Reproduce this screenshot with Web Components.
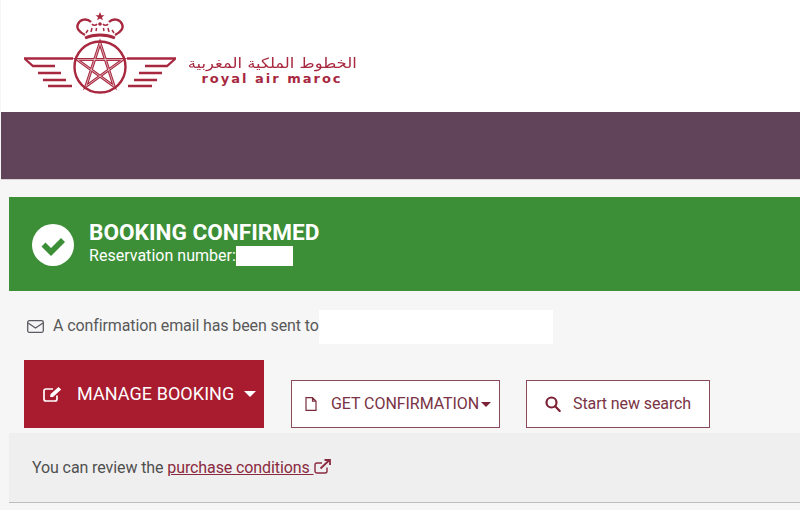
<!DOCTYPE html>
<html>
<head>
<meta charset="utf-8">
<style>
  html, body { margin: 0; padding: 0; background: #f6f6f6; }
  body { width: 800px; height: 510px; overflow: hidden; font-family: Roboto, "Liberation Sans", sans-serif; }
  main { display: block; padding-left: 9px; }
  .actions { display: flex; align-items: flex-end; padding-left: 15px; margin-top: 16px; }
</style>
</head>
<body>
<ram-header></ram-header>
<main>
  <confirm-banner>BOOKING CONFIRMED</confirm-banner>
  <mail-notice>A confirmation email has been sent to</mail-notice>
  <div class="actions">
    <manage-button>MANAGE BOOKING</manage-button>
    <outline-button icon="file" caret pad="13" gap="14" style="margin-left:27px;width:209px;letter-spacing:-.06px">GET CONFIRMATION</outline-button>
    <outline-button icon="search" pad="18" gap="12" style="margin-left:26px;width:184px;letter-spacing:-.1px">Start new search</outline-button>
  </div>
  <review-note>You can review the</review-note>
</main>

<script>
const headerTemplate = document.createElement('template');
headerTemplate.innerHTML = `
  <style>
    :host { display: block; margin-left: 1px; }
    .top { height: 112px; background: #fff; display: flex; align-items: flex-start; padding-left: 23px; }
    svg { display: block; margin-top: 11px; flex: none; filter: blur(.3px); }
    .names { margin-left: 9px; margin-top: 55px; display: flex; flex-direction: column; align-items: center; width: 170px; color: #a8283f; }
    .ar { font: 400 14px/16px "DejaVu Sans", sans-serif; white-space: nowrap; display: block; transform: scaleX(1.17); }
    .en { font: 700 13px/15px "DejaVu Sans", sans-serif; letter-spacing: 2px; white-space: nowrap; }
    .band { height: 68px; background: #62445a; border-bottom: 1px solid #d9d2d8; box-sizing: border-box; }
  </style>
  <div class="top">
    <svg width="154" height="84" viewBox="24 11 154 84" fill="none" stroke="#a8283f">
      <!-- crown -->
      <path d="M100 12l1.300 3.200h3.200l-2.500 2 .9 3.100-2.900-1.900-2.900 1.900.9-3.100-2.500-2h3.200z" fill="#a8283f" stroke="none"/>
      <path d="M85 35c-6-3-9-7-7-11 2-5 9-6 13-2M115 35c6-3 9-7 7-11-2-5-9-6-13-2" stroke-width="2.400"/>
      <path d="M92 24a3 3 0 0 0 5 0M103 24a3 3 0 0 0 5 0" stroke-width="1.500"/>
      <circle cx="100" cy="24" r="1.800" fill="#a8283f" stroke="none"/>
      <path d="M86 33l2-3M91 32l1-4M96 31l.6-3M104 31l-.6-3M109 32l-1-4M114 33l-2-3" stroke-width="1.500"/>
      <path d="M85 38c9-4 21-4 30 0" stroke-width="2.800"/>
      <!-- roundel -->
      <circle cx="100" cy="67" r="25.500" stroke-width="2.400"/>
      <path d="M100 43l14.100 43.400-36.900-26.800h45.600l-36.900 26.800z" stroke-width="3"/>
      <path d="M100 43l14.100 43.400-36.900-26.800h45.600l-36.900 26.800z" stroke="#fff" stroke-width=".6"/>
      <!-- wings -->
      <g stroke-width="2.300">
        <path d="M24 58.500h49M127 58.500h49" stroke-width="2.600"/>
        <path d="M25 59l8 7h22M175 59l-8 7h-22"/>
        <path d="M38 73h23M162 73h-23"/>
        <path d="M43 80h23M157 80h-23"/>
        <path d="M48 86h24M152 86h-24"/>
      </g>
    </svg>
    <div class="names">
      <span class="ar" dir="rtl">الخطوط الملكية المغربية</span>
      <span class="en">royal air maroc</span>
    </div>
  </div>
  <div class="band"></div>
`;
class RamHeader extends HTMLElement {
  constructor() {
    super();
    this.attachShadow({ mode: 'open' }).appendChild(headerTemplate.content.cloneNode(true));
  }
}
customElements.define('ram-header', RamHeader);

const bannerTemplate = document.createElement('template');
bannerTemplate.innerHTML = `
  <style>
    :host { display: block; margin-top: 17px; background: #3c8f36; color: #fff; height: 94px; }
    .row { display: flex; align-items: center; height: 100%; padding-left: 23px; box-sizing: border-box; }
    svg { flex: none; margin-top: 1px; }
    .txt { margin-left: 15px; margin-top: -4px; }
    h1 { margin: 0; font: 700 22.600px/27px Roboto, sans-serif; }
    p { margin: 0; font: 400 16px/20px Roboto, sans-serif; display: flex; align-items: center; letter-spacing: .02px; }
    i { display: block; width: 57px; height: 20px; background: #fff; }
  </style>
  <div class="row">
    <svg width="42" height="42" viewBox="0 0 42 42">
      <circle cx="21" cy="21" r="21" fill="#fff"/>
      <path d="M9.500 22.500l4-4 5.500 5.500 10-10 4 4-14 14z" fill="#3c8f36"/>
    </svg>
    <div class="txt">
      <h1><slot></slot></h1>
      <p>Reservation number:<i></i></p>
    </div>
  </div>
`;
class ConfirmBanner extends HTMLElement {
  constructor() {
    super();
    this.attachShadow({ mode: 'open' }).appendChild(bannerTemplate.content.cloneNode(true));
  }
}
customElements.define('confirm-banner', ConfirmBanner);

const noticeTemplate = document.createElement('template');
noticeTemplate.innerHTML = `
  <style>
    :host { display: flex; align-items: center; margin-top: 19px; padding-left: 18px; height: 34px; color: #595959; font: 400 16px/20px Roboto, sans-serif; letter-spacing: -.11px; }
    svg { flex: none; margin-right: 9px; margin-top: -1px; }
    span { margin-top: -2px; }
    i { display: block; width: 234px; height: 34px; background: #fff; }
  </style>
  <svg width="17" height="13" viewBox="0 0 17 13" fill="none" stroke="#5b5b63" stroke-width="1.300">
    <rect x=".7" y=".7" width="15.600" height="11.600" rx="1.500"/>
    <path d="M1 3l7.500 5L16 3"/>
  </svg>
  <span><slot></slot></span><i></i>
`;
class MailNotice extends HTMLElement {
  constructor() {
    super();
    this.attachShadow({ mode: 'open' }).appendChild(noticeTemplate.content.cloneNode(true));
  }
}
customElements.define('mail-notice', MailNotice);

const manageTemplate = document.createElement('template');
manageTemplate.innerHTML = `
  <style>
    :host { display: flex; align-items: center; box-sizing: border-box; width: 240px; height: 68px; background: #a91b2f; color: #fff; font: 400 18px/20px Roboto, sans-serif; padding: 0 0 0 19px; flex: none; }
    svg { flex: none; }
    .label { margin-left: 14px; letter-spacing: .06px; white-space: nowrap; }
    .caret { margin-left: 10px; width: 0; height: 0; border: 6px solid transparent; border-top: 6px solid #fff; border-bottom: 0; }
  </style>
  <svg width="20" height="16" viewBox="0 0 20 16" fill="none" stroke="#fff" stroke-width="1.700">
    <path d="M14 9.500V13a2 2 0 0 1-2 2H3a2 2 0 0 1-2-2V5a2 2 0 0 1 2-2h7"/>
    <path d="M7 11l.6-3L15.500 1l2.700 2.500L10 11z" fill="#fff" stroke="none"/>
  </svg>
  <span class="label"><slot></slot></span>
  <span class="caret"></span>
`;
class ManageButton extends HTMLElement {
  constructor() {
    super();
    this.attachShadow({ mode: 'open' }).appendChild(manageTemplate.content.cloneNode(true));
  }
}
customElements.define('manage-button', ManageButton);

const outlineIcons = {
  file: `<svg width="12" height="14" viewBox="0 0 12 14" fill="none" stroke="#7a2a3c" stroke-width="1.200"><path d="M1 .7h6.500L11 4.200v9.100H1zM7.500.7v3.500H11"/></svg>`,
  search: `<svg width="16" height="16" viewBox="0 0 16 16" fill="none" stroke="#7d2236" stroke-width="2.200"><circle cx="6.500" cy="6.500" r="5"/><path d="M10.200 10.200l4.500 4.800" stroke-linecap="round"/></svg>`
};
class OutlineButton extends HTMLElement {
  constructor() {
    super();
    const root = this.attachShadow({ mode: 'open' });
    const caret = this.hasAttribute('caret') ? '<span class="caret"></span>' : '';
    root.innerHTML = `
      <style>
        :host { display: flex; align-items: center; box-sizing: border-box; height: 48px; background: #fff; border: 1px solid #8a4a5a; color: #7a3344; font: 400 16px/20px Roboto, sans-serif; padding-left: ${this.getAttribute('pad') || 12}px; flex: none; white-space: nowrap; }
        svg { flex: none; margin-right: ${this.getAttribute('gap') || 12}px; }
        .caret { margin-left: 2px; width: 0; height: 0; border: 5px solid transparent; border-top: 5px solid #7a2236; border-bottom: 0; }
      </style>
      ${outlineIcons[this.getAttribute('icon')]}<slot></slot>${caret}
    `;
  }
}
customElements.define('outline-button', OutlineButton);

const reviewTemplate = document.createElement('template');
reviewTemplate.innerHTML = `
  <style>
    :host { display: block; box-sizing: border-box; height: 70px; margin-top: 5px; padding: 25px 0 0 23px; background: #efefef; border-bottom: 1px solid #bdbdbd; color: #4f4f4f; font: 400 16px/20px Roboto, sans-serif; letter-spacing: -.1px; }
    a { color: #8a2a40; text-decoration: underline; }
    svg { vertical-align: -1px; }
  </style>
  <slot></slot>
  <a href="#">purchase conditions <svg width="17" height="15" viewBox="0 0 17 15" fill="none" stroke="#8a2a40" stroke-width="1.400">
      <path d="M13 8.500V12a2 2 0 0 1-2 2H3a2 2 0 0 1-2-2V6a2 2 0 0 1 2-2h5"/>
      <path d="M6.500 9.500L15 1.500M10.500 1h5.500v5" stroke-width="1.800"/>
    </svg></a>
`;
class ReviewNote extends HTMLElement {
  constructor() {
    super();
    this.attachShadow({ mode: 'open' }).appendChild(reviewTemplate.content.cloneNode(true));
  }
}
customElements.define('review-note', ReviewNote);
</script>
</body>
</html>
